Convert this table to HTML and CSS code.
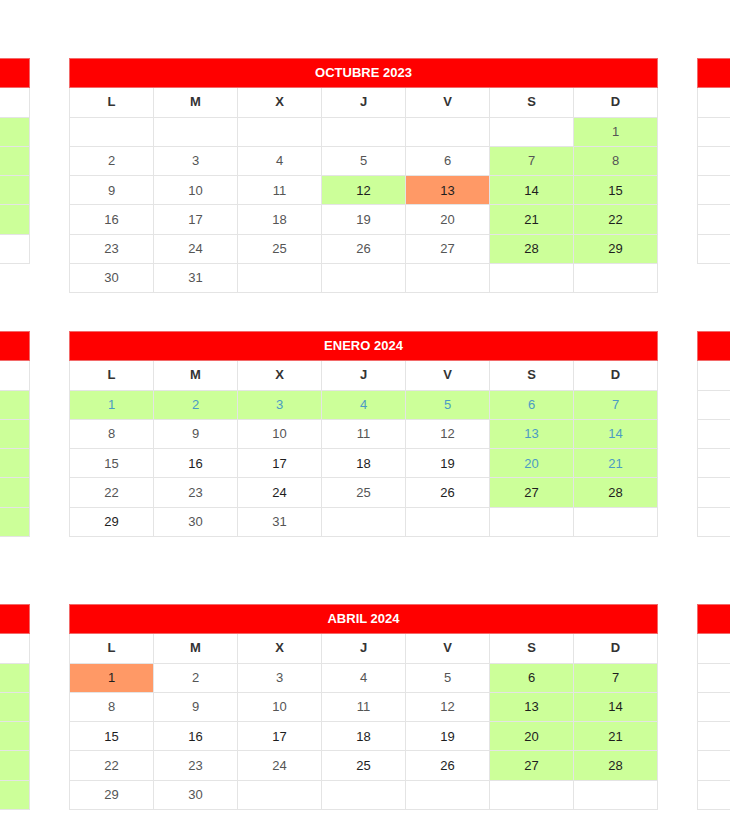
FILE: index.html
```html
<!DOCTYPE html>
<html lang="es">
<head>
<meta charset="utf-8">
<title>Calendario</title>
<link rel="stylesheet" href="styles.css">
</head>
<body>
<div class="page">
  <div class="cal-row">
    <table class="cal side" aria-label="Septiembre 2023">
      <thead>
        <tr class="title"><th colspan="7"></th></tr>
        <tr class="days"><th></th><th></th><th></th><th></th><th></th><th></th><th></th></tr>
      </thead>
      <tbody>
        <tr><td></td><td></td><td></td><td></td><td></td><td class="we"></td><td class="we"></td></tr>
        <tr><td></td><td></td><td></td><td></td><td></td><td class="we"></td><td class="we"></td></tr>
        <tr><td></td><td></td><td></td><td></td><td></td><td class="we"></td><td class="we"></td></tr>
        <tr><td></td><td></td><td></td><td></td><td></td><td class="we"></td><td class="we"></td></tr>
        <tr><td></td><td></td><td></td><td></td><td></td><td class="we"></td><td></td></tr>
      </tbody>
    </table>
    <table class="cal">
      <thead>
        <tr class="title"><th colspan="7">OCTUBRE 2023</th></tr>
        <tr class="days"><th>L</th><th>M</th><th>X</th><th>J</th><th>V</th><th>S</th><th>D</th></tr>
      </thead>
      <tbody>
        <tr><td></td><td></td><td></td><td></td><td></td><td></td><td class="we">1</td></tr>
        <tr><td>2</td><td>3</td><td>4</td><td>5</td><td>6</td><td class="we">7</td><td class="we">8</td></tr>
        <tr><td>9</td><td>10</td><td>11</td><td class="we dk">12</td><td class="hol dk">13</td><td class="we dk">14</td><td class="we dk">15</td></tr>
        <tr><td>16</td><td>17</td><td>18</td><td>19</td><td>20</td><td class="we dk">21</td><td class="we dk">22</td></tr>
        <tr><td>23</td><td>24</td><td>25</td><td>26</td><td>27</td><td class="we dk">28</td><td class="we dk">29</td></tr>
        <tr><td>30</td><td>31</td><td></td><td></td><td></td><td></td><td></td></tr>
      </tbody>
    </table>
    <table class="cal side" aria-label="Noviembre 2023">
      <thead>
        <tr class="title"><th colspan="7"></th></tr>
        <tr class="days"><th></th><th></th><th></th><th></th><th></th><th></th><th></th></tr>
      </thead>
      <tbody>
        <tr><td></td><td></td><td></td><td></td><td></td><td class="we"></td><td class="we"></td></tr>
        <tr><td></td><td></td><td></td><td></td><td></td><td class="we"></td><td class="we"></td></tr>
        <tr><td></td><td></td><td></td><td></td><td></td><td class="we"></td><td class="we"></td></tr>
        <tr><td></td><td></td><td></td><td></td><td></td><td class="we"></td><td class="we"></td></tr>
        <tr><td></td><td></td><td></td><td></td><td></td><td></td><td></td></tr>
      </tbody>
    </table>
  </div>

  <div class="cal-row">
    <table class="cal side" aria-label="Diciembre 2023">
      <thead>
        <tr class="title"><th colspan="7"></th></tr>
        <tr class="days"><th></th><th></th><th></th><th></th><th></th><th></th><th></th></tr>
      </thead>
      <tbody>
        <tr><td></td><td></td><td></td><td></td><td></td><td class="we"></td><td class="we"></td></tr>
        <tr><td></td><td></td><td></td><td></td><td></td><td class="we"></td><td class="we"></td></tr>
        <tr><td></td><td></td><td></td><td></td><td></td><td class="we"></td><td class="we"></td></tr>
        <tr><td></td><td></td><td></td><td></td><td></td><td class="we"></td><td class="we"></td></tr>
        <tr><td></td><td></td><td></td><td></td><td></td><td class="we"></td><td class="we"></td></tr>
      </tbody>
    </table>
    <table class="cal">
      <thead>
        <tr class="title"><th colspan="7">ENERO 2024</th></tr>
        <tr class="days"><th>L</th><th>M</th><th>X</th><th>J</th><th>V</th><th>S</th><th>D</th></tr>
      </thead>
      <tbody>
        <tr><td class="we bl">1</td><td class="we bl">2</td><td class="we bl">3</td><td class="we bl">4</td><td class="we bl">5</td><td class="we bl">6</td><td class="we bl">7</td></tr>
        <tr><td>8</td><td>9</td><td>10</td><td>11</td><td>12</td><td class="we bl">13</td><td class="we bl">14</td></tr>
        <tr><td>15</td><td class="dk">16</td><td class="dk">17</td><td class="dk">18</td><td class="dk">19</td><td class="we bl">20</td><td class="we bl">21</td></tr>
        <tr><td>22</td><td>23</td><td class="dk">24</td><td>25</td><td class="dk">26</td><td class="we dk">27</td><td class="we dk">28</td></tr>
        <tr><td class="dk">29</td><td>30</td><td>31</td><td></td><td></td><td></td><td></td></tr>
      </tbody>
    </table>
    <table class="cal side" aria-label="Febrero 2024">
      <thead>
        <tr class="title"><th colspan="7"></th></tr>
        <tr class="days"><th></th><th></th><th></th><th></th><th></th><th></th><th></th></tr>
      </thead>
      <tbody>
        <tr><td></td><td></td><td></td><td></td><td></td><td class="we"></td><td class="we"></td></tr>
        <tr><td></td><td></td><td></td><td></td><td></td><td class="we"></td><td class="we"></td></tr>
        <tr><td></td><td></td><td></td><td></td><td></td><td class="we"></td><td class="we"></td></tr>
        <tr><td></td><td></td><td></td><td></td><td></td><td class="we"></td><td class="we"></td></tr>
        <tr><td></td><td></td><td></td><td></td><td></td><td></td><td></td></tr>
      </tbody>
    </table>
  </div>

  <div class="cal-row">
    <table class="cal side" aria-label="Marzo 2024">
      <thead>
        <tr class="title"><th colspan="7"></th></tr>
        <tr class="days"><th></th><th></th><th></th><th></th><th></th><th></th><th></th></tr>
      </thead>
      <tbody>
        <tr><td></td><td></td><td></td><td></td><td></td><td class="we"></td><td class="we"></td></tr>
        <tr><td></td><td></td><td></td><td></td><td></td><td class="we"></td><td class="we"></td></tr>
        <tr><td></td><td></td><td></td><td></td><td></td><td class="we"></td><td class="we"></td></tr>
        <tr><td></td><td></td><td></td><td></td><td></td><td class="we"></td><td class="we"></td></tr>
        <tr><td></td><td></td><td></td><td></td><td></td><td class="we"></td><td class="we"></td></tr>
      </tbody>
    </table>
    <table class="cal">
      <thead>
        <tr class="title"><th colspan="7">ABRIL 2024</th></tr>
        <tr class="days"><th>L</th><th>M</th><th>X</th><th>J</th><th>V</th><th>S</th><th>D</th></tr>
      </thead>
      <tbody>
        <tr><td class="hol dk">1</td><td>2</td><td>3</td><td>4</td><td>5</td><td class="we dk">6</td><td class="we dk">7</td></tr>
        <tr><td>8</td><td>9</td><td>10</td><td>11</td><td>12</td><td class="we dk">13</td><td class="we dk">14</td></tr>
        <tr><td class="dk">15</td><td class="dk">16</td><td class="dk">17</td><td class="dk">18</td><td class="dk">19</td><td class="we dk">20</td><td class="we dk">21</td></tr>
        <tr><td>22</td><td>23</td><td>24</td><td class="dk">25</td><td class="dk">26</td><td class="we dk">27</td><td class="we dk">28</td></tr>
        <tr><td>29</td><td>30</td><td></td><td></td><td></td><td></td><td></td></tr>
      </tbody>
    </table>
    <table class="cal side" aria-label="Mayo 2024">
      <thead>
        <tr class="title"><th colspan="7"></th></tr>
        <tr class="days"><th></th><th></th><th></th><th></th><th></th><th></th><th></th></tr>
      </thead>
      <tbody>
        <tr><td></td><td></td><td></td><td></td><td></td><td class="we"></td><td class="we"></td></tr>
        <tr><td></td><td></td><td></td><td></td><td></td><td class="we"></td><td class="we"></td></tr>
        <tr><td></td><td></td><td></td><td></td><td></td><td class="we"></td><td class="we"></td></tr>
        <tr><td></td><td></td><td></td><td></td><td></td><td class="we"></td><td class="we"></td></tr>
        <tr><td></td><td></td><td></td><td></td><td></td><td></td><td></td></tr>
      </tbody>
    </table>
  </div>
</div>
</body>
</html>
```
FILE: styles.css
```css
html, body {
  margin: 0;
  padding: 0;
  background: #ffffff;
  overflow: hidden;
}

body {
  font-family: "Liberation Sans", Arial, Helvetica, sans-serif;
}

.page {
  padding-top: 58px;
  width: 730px;
  overflow: hidden;
}

.cal-row {
  display: flex;
  align-items: flex-start;
  gap: 39px;
  margin-left: -559px;
  height: 234px;
  margin-bottom: 39px;
}

.cal {
  flex: none;
  width: 589px;
  border-collapse: collapse;
  table-layout: fixed;
}

.cal th,
.cal td {
  border: 1px solid #e4e4e4;
  padding: 0;
  text-align: center;
  vertical-align: middle;
}

.cal tr {
  height: 29.25px;
}

.cal .title th {
  background: #ff0000;
  border-color: #f26a6a;
  color: #ffffff;
  font-size: 13px;
  font-weight: bold;
  padding-bottom: 2px;
}

.cal .days th {
  color: #333333;
  font-size: 13px;
  font-weight: bold;
  padding-bottom: 2px;
}

.cal td {
  color: #555555;
  font-size: 13px;
}

.cal td.we {
  background: #ccff99;
}

.cal td.hol {
  background: #ff9966;
}

.cal td.dk {
  color: #1e1e1e;
}

.cal td.bl {
  color: #4b9bc4;
}
```
